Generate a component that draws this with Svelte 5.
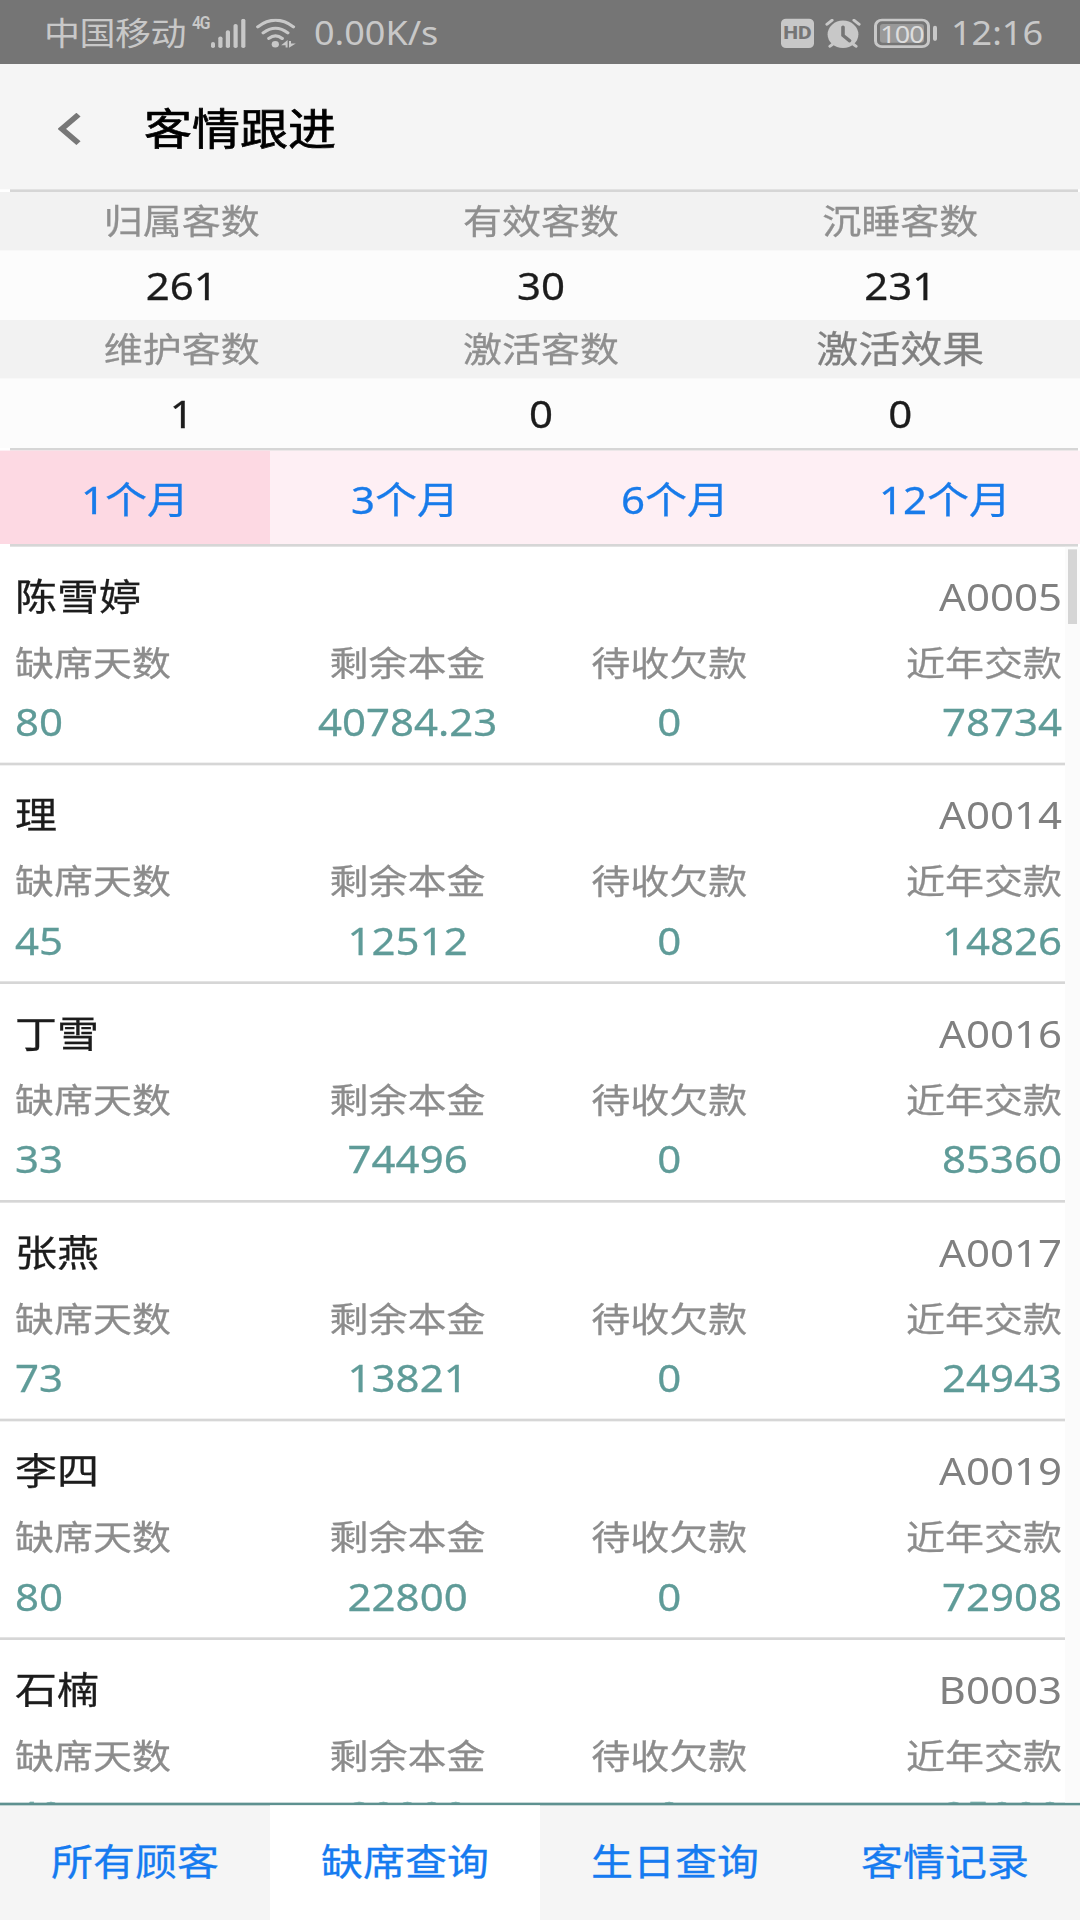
<script>
  const summary = [
    [
      { label: '归属客数', value: 261 },
      { label: '有效客数', value: 30 },
      { label: '沉睡客数', value: 231 },
    ],
    [
      { label: '维护客数', value: 1 },
      { label: '激活客数', value: 0 },
      { label: '激活效果', value: 0, link: true },
    ],
  ]

  const periods = ['1个月', '3个月', '6个月', '12个月']
  const pages = ['所有顾客', '缺席查询', '生日查询', '客情记录']

  const customers = [
    { name: '陈雪婷', code: 'A0005', days: 80, balance: '40784.23', debt: 0, paid: 78734 },
    { name: '理',     code: 'A0014', days: 45, balance: '12512',    debt: 0, paid: 14826 },
    { name: '丁雪',   code: 'A0016', days: 33, balance: '74496',    debt: 0, paid: 85360 },
    { name: '张燕',   code: 'A0017', days: 73, balance: '13821',    debt: 0, paid: 24943 },
    { name: '李四',   code: 'A0019', days: 80, balance: '22800',    debt: 0, paid: 72908 },
    { name: '石楠',   code: 'B0003', days: 40, balance: '20000',    debt: 0, paid: 25000 },
  ]

  let period = $state(0)
  let page = $state(1)
</script>

<div class="frame">
<div class="screen">
  <div class="status">
    <span class="carrier">中国移动</span>
    <span class="net">4G</span>
    <svg class="signal" width="35" height="33" viewBox="0 0 35 33" fill="currentColor">
      <rect x="0" y="26.3" width="4" height="6.7" rx="2" />
      <rect x="7.3" y="20" width="4.2" height="13" rx="2" />
      <rect x="14.8" y="13" width="4.2" height="20" rx="2" />
      <rect x="22.5" y="6" width="4.2" height="27" rx="2" />
      <rect x="30.2" y="0" width="4.2" height="33" rx="2" />
    </svg>
    <svg class="wifi" width="40" height="33" viewBox="0 0 40 33" fill="none" stroke="currentColor" stroke-width="3.4" stroke-linecap="round">
      <path d="M1.8 9.2Q19.5-5.8 37.4 9.2M7.2 16Q19.5 5.5 31.8 16M12.9 22.3Q19.5 16.5 26.2 22.3" />
      <circle cx="19.3" cy="28.8" r="3.6" fill="currentColor" stroke="none" />
      <path d="M25.2 29.8l6.4-5.8v8.5h-2v-2.7zM33 25.2h2v2.6h4.8L33 32.8z" fill="currentColor" stroke="none" />
    </svg>
    <span class="speed">0.00K/s</span>
    <span class="hd">HD</span>
    <svg class="alarm" width="36" height="33" viewBox="0 0 36 33">
      <circle cx="18" cy="17.6" r="15.4" fill="currentColor" />
      <path d="M2 6.3L7 1.8M34 6.3L29 1.8M5 31l4-3.5M31 31l-4-3.5" stroke="currentColor" stroke-width="3.2" stroke-linecap="round" />
      <path d="M18 9.5v9.3l6.6 6" fill="none" stroke="#757575" stroke-width="3.6" stroke-linecap="round" stroke-linejoin="round" />
    </svg>
    <span class="battery"><span class="level">100</span></span>
    <span class="clock">12:16</span>
  </div>

  <header>
    <svg width="23" height="36" viewBox="0 0 23 36" fill="none" stroke="#777" stroke-width="6">
      <path d="M20.5 2L3.8 18l16.7 16" />
    </svg>
    <h1>客情跟进</h1>
  </header>
  <div class="rule"></div>

  <section class="summary">
    {#each summary as row}
      <div class="labels">
        {#each row as cell}<span class:link={cell.link}>{cell.label}</span>{/each}
      </div>
      <div class="totals">
        {#each row as cell}<span>{cell.value}</span>{/each}
      </div>
    {/each}
  </section>
  <div class="rule"></div>

  <nav class="periods">
    {#each periods as p, i}
      <button class:active={i === period} onclick={() => (period = i)}>{p}</button>
    {/each}
  </nav>
  <div class="rule"></div>

  <main>
    <div class="list">
      {#each customers as c}
        <article>
          <div class="head">
            <span class="name">{c.name}</span>
            <span class="code">{c.code}</span>
          </div>
          <div class="cols fields">
            <span>缺席天数</span><span>剩余本金</span><span>待收欠款</span><span>近年交款</span>
          </div>
          <div class="cols values">
            <span>{c.days}</span><span>{c.balance}</span><span>{c.debt}</span><span>{c.paid}</span>
          </div>
        </article>
      {/each}
    </div>
    <div class="track"><div class="thumb"></div></div>
  </main>

  <nav class="pages">
    {#each pages as p, i}
      <button class:active={i === page} onclick={() => (page = i)}>{p}</button>
    {/each}
  </nav>
</div>
</div>

<style>
  :global(body) { margin: 0; background: #fff; }

  .frame { width: 1080px; height: 1920px; overflow: hidden; }

  /* 1080x2160 layout fitted to a 1920 high screen */
  .screen {
    width: 1080px;
    height: 2160px;
    transform: scaleY(.88889);
    transform-origin: 0 0;
    display: flex;
    flex-direction: column;
    font-family: "Noto Sans", "Noto Sans CJK SC", sans-serif;
    font-size: 42px;
    color: #1c1c1c;
    -webkit-text-stroke: .3px;
  }

  .status { height: 72px; flex: none; box-sizing: border-box; display: flex; align-items: center; padding: 3px 37px 0 44px; background: #757575; color: #c8c8c8; font-size: 36px; line-height: 60px; white-space: nowrap; -webkit-text-stroke: 0; }
  .carrier { width: 142px; letter-spacing: -.5px; }
  .net     { width: 24px; margin-left: 6px; margin-top: -23px; font-family: Roboto, sans-serif; font-size: 21px; font-weight: 600; letter-spacing: -1.5px; transform: scaleX(.75); transform-origin: 0 0; line-height: 24px; }
  .signal  { margin-left: -5px; }
  .wifi    { margin-left: 10px; }
  .speed   { margin-left: 18px; }
  .hd      { margin-left: auto; width: 33px; height: 33px; border-radius: 5px; background: #c8c8c8; color: #757575; font-family: Roboto, sans-serif; font-size: 21px; font-weight: 800; line-height: 33px; text-align: center; }
  .alarm   { margin-left: 11px; }
  .battery { position: relative; margin-left: 13px; width: 56px; height: 33px; box-sizing: border-box; border: 3px solid #c8c8c8; border-radius: 8px; padding: 3px; }
  .battery::after { content: ''; position: absolute; left: 56px; top: 5px; width: 4px; height: 17px; border-radius: 2px; background: #c8c8c8; }
  .level   { display: block; height: 21px; border-radius: 3px; background: #999; font-size: 27px; line-height: 21px; text-align: center; letter-spacing: -1px; color: #ddd; }
  .clock   { margin-left: 21px; }

  header { height: 141px; flex: none; display: flex; align-items: center; padding-left: 58px; background: #f5f5f5; }
  header svg { margin-top: 5px; }
  h1 { margin: 4px 0 0 63px; font-size: 48px; font-weight: 400; line-height: 60px; color: #000; -webkit-text-stroke: .8px; }

  .rule { height: 3px; flex: none; margin: 0 2px 0 10px; background: #d6d6d6; }

  .labels, .totals { display: grid; grid-template-columns: repeat(3, 1fr); padding-left: 2px; text-align: center; }
  .labels { height: 66px; line-height: 64px; background: #f2f2f2; color: #8f8f8f; font-size: 39px; }
  .labels .link { font-size: 42px; color: #808080; }
  .totals { height: 78px; line-height: 78px; background: #fcfcfc; }

  nav { display: grid; grid-template-columns: repeat(4, 1fr); flex: none; }
  button { border: 0; padding: 0; font: inherit; color: #187bea; background: none; }
  .periods { height: 105px; background: #feeff4; }
  .periods .active { background: #fdd9e3; }

  main { flex: 1; min-height: 0; display: flex; overflow: hidden; }
  .list { flex: 1; }
  article { height: 246px; box-sizing: border-box; padding: 26px 3px 0 15px; border-bottom: 3px solid #d6d6d6; }
  .head { display: flex; justify-content: space-between; height: 60px; line-height: 60px; }
  .code { color: #808080; -webkit-text-stroke: 0; }
  .cols { display: grid; grid-template-columns: repeat(4, 1fr); height: 60px; line-height: 60px; text-align: center; }
  .cols span:first-child { text-align: left; }
  .cols span:last-child  { text-align: right; }
  .fields { margin-top: 14px; font-size: 39px; color: #8c8c8c; }
  .values { margin-top: 7px; color: #5f9b98; }

  .track { width: 15px; background: #fbfbfb; }
  .thumb { width: 9px; height: 84px; margin: 3px 0 0 3px; background: #d5d5d5; }

  .pages { height: 129px; border-top: 3px solid #5e9190; background: #f5f5f5; }
  .pages button { padding-bottom: 6px; color: #167bf0; }
  .pages .active { background: #fff; }
</style>
